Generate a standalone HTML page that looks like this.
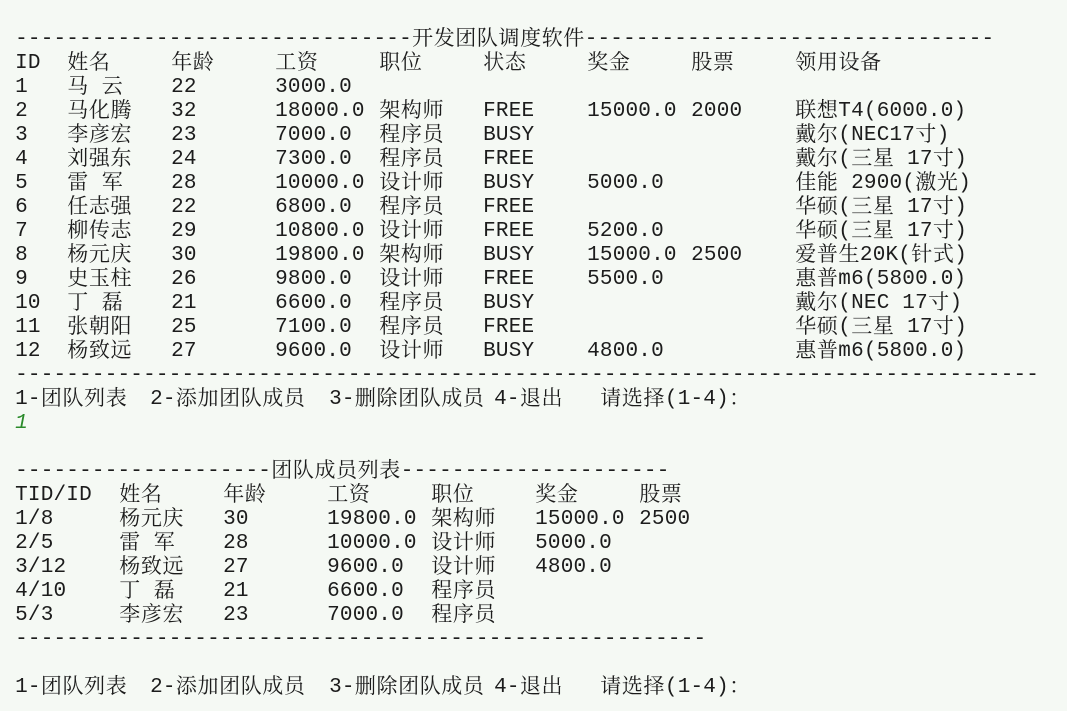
<!DOCTYPE html>
<html><head><meta charset="utf-8">
<style>
html,body{margin:0;padding:0;background:#f5f9f4;width:1067px;height:711px;overflow:hidden}
#c{position:relative;width:1067px;height:711px}
.ch{position:absolute;height:24px;line-height:24px;text-align:center;color:#1c1c1c;white-space:pre}
.a{font-family:"Liberation Mono",monospace;font-size:21px;width:12.8px;margin-top:2px}
.k{font-family:"Liberation Serif","Noto Serif CJK SC","Noto Sans CJK SC",serif;font-size:21px;width:21.6px;margin-top:0px}
.g{color:#2a8a2a;font-style:italic}
</style></head><body><div id="c"></div>
<script>
function d(n){return "-".repeat(n);}
var A=[15,67,171,275,379,483,587,691,795],B=[15,119,223,327,431,535,639],M=[15,150,329,494,600];
function row(cols,arr){return arr.map(function(t,i){return [cols[i],t];}).filter(function(p){return p[1]!=="";});}
var L=[
[0,[[15,d(31)+"开发团队调度软件"+d(32)]]],
[1,row(A,["ID","姓名","年龄","工资","职位","状态","奖金","股票","领用设备"])],
[2,row(A,["1","马 云","22","3000.0","","","","",""])],
[3,row(A,["2","马化腾","32","18000.0","架构师","FREE","15000.0","2000","联想T4(6000.0)"])],
[4,row(A,["3","李彦宏","23","7000.0","程序员","BUSY","","","戴尔(NEC17寸)"])],
[5,row(A,["4","刘强东","24","7300.0","程序员","FREE","","","戴尔(三星 17寸)"])],
[6,row(A,["5","雷 军","28","10000.0","设计师","BUSY","5000.0","","佳能 2900(激光)"])],
[7,row(A,["6","任志强","22","6800.0","程序员","FREE","","","华硕(三星 17寸)"])],
[8,row(A,["7","柳传志","29","10800.0","设计师","FREE","5200.0","","华硕(三星 17寸)"])],
[9,row(A,["8","杨元庆","30","19800.0","架构师","BUSY","15000.0","2500","爱普生20K(针式)"])],
[10,row(A,["9","史玉柱","26","9800.0","设计师","FREE","5500.0","","惠普m6(5800.0)"])],
[11,row(A,["10","丁 磊","21","6600.0","程序员","BUSY","","","戴尔(NEC 17寸)"])],
[12,row(A,["11","张朝阳","25","7100.0","程序员","FREE","","","华硕(三星 17寸)"])],
[13,row(A,["12","杨致远","27","9600.0","设计师","BUSY","4800.0","","惠普m6(5800.0)"])],
[14,[[15,d(80)]]],
[15,row(M,["1-团队列表","2-添加团队成员","3-删除团队成员","4-退出","请选择(1-4)："])],
[18,[[15,d(20)+"团队成员列表"+d(21)]]],
[19,row(B,["TID/ID","姓名","年龄","工资","职位","奖金","股票"])],
[20,row(B,["1/8","杨元庆","30","19800.0","架构师","15000.0","2500"])],
[21,row(B,["2/5","雷 军","28","10000.0","设计师","5000.0",""])],
[22,row(B,["3/12","杨致远","27","9600.0","设计师","4800.0",""])],
[23,row(B,["4/10","丁 磊","21","6600.0","程序员","",""])],
[24,row(B,["5/3","李彦宏","23","7000.0","程序员","",""])],
[25,[[15,d(54)]]],
[27,row(M,["1-团队列表","2-添加团队成员","3-删除团队成员","4-退出","请选择(1-4)："])]
];
var c=document.getElementById('c'),h='';
function put(line,x,t,extra){
  var y=26+line*24;
  for(var i=0;i<t.length;i++){
    var ch=t[i],w=ch.charCodeAt(0)>255;
    if(ch!==' ')h+='<span class="ch '+(w?'k':'a')+(extra||'')+'" style="left:'+x.toFixed(1)+'px;top:'+y+'px">'+ch+'</span>';
    x+=w?21.6:12.8;
  }
}
L.forEach(function(r){r[1].forEach(function(p){put(r[0],p[0],p[1]);});});
put(16,15,"1"," g");
c.innerHTML=h;
</script></body></html>
